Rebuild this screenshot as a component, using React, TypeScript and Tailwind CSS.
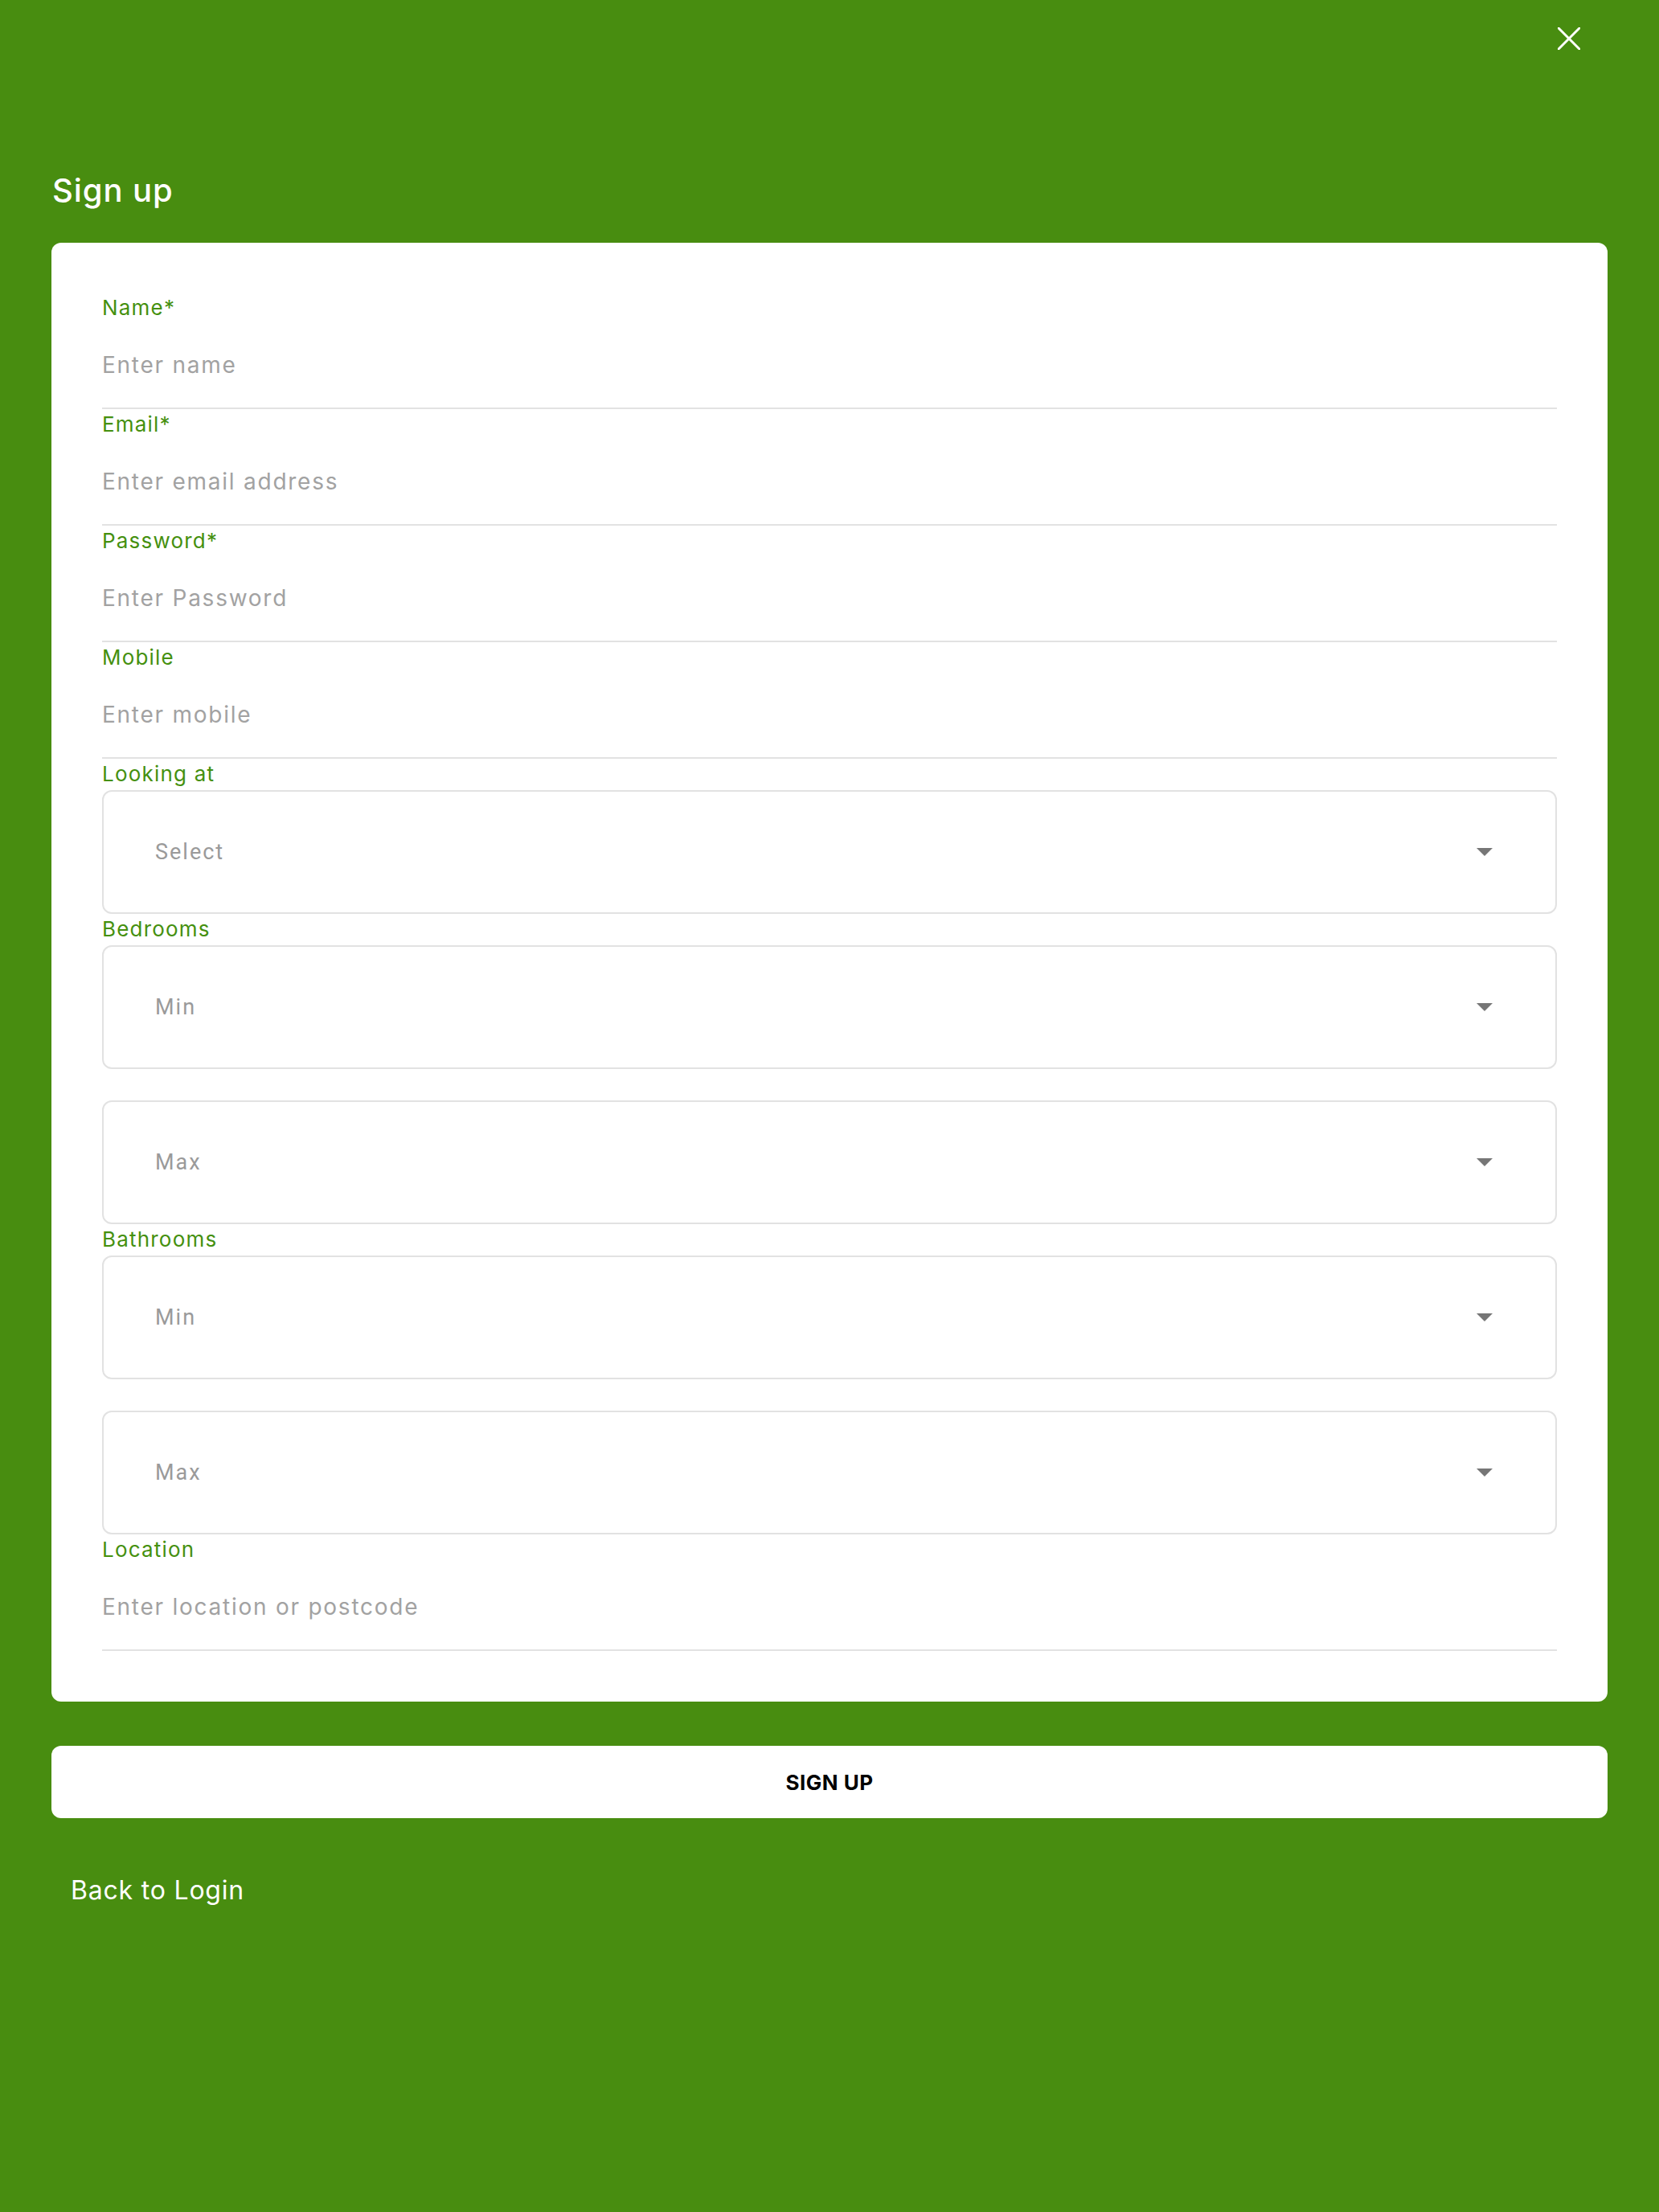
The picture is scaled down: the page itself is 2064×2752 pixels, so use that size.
type TextFieldProps = {
  label: string;
  placeholder: string;
  type?: string;
};

// Underlined text input with a small green label above it
function TextField({ label, placeholder, type = 'text' }: TextFieldProps) {
  return (
    <div className="flex flex-col">
      <label className="h-[34px] pt-[2px] text-[26px] leading-[34px] text-[#45900f] tracking-[1.2px]">
        {label}
      </label>
      <div className="flex h-[111px] items-center border-b-2 border-[#e2e2e2] pt-[3px]">
        <input
          type={type}
          placeholder={placeholder}
          className="w-full bg-transparent text-[28px] tracking-[1.75px] text-[#333] outline-none placeholder:text-[#a2a2a2]"
        />
      </div>
    </div>
  );
}

// Outlined dropdown with a solid caret on the right
function SelectBox({ value }: { value: string }) {
  return (
    <button
      type="button"
      className="flex h-[154px] w-full items-center justify-between rounded-[12px] border-2 border-[#e2e2e2] bg-white pl-[64px] pr-[78px] text-left"
    >
      <span className="text-[27px] tracking-[2px] text-[#9a9a9a] font-['Roboto',sans-serif]">{value}</span>
      <svg width="20" height="10" viewBox="0 0 20 10" aria-hidden="true">
        <path d="M0 0h20L10 10z" fill="#767676" />
      </svg>
    </button>
  );
}

function SelectField({ label, value }: { label?: string; value: string }) {
  return (
    <div className="flex flex-col">
      {label ? (
        <label className="mb-[5px] h-[34px] pt-[2px] text-[26px] leading-[34px] text-[#45900f] tracking-[1.2px]">
          {label}
        </label>
      ) : (
        <div className="h-[39px]" />
      )}
      <SelectBox value={value} />
    </div>
  );
}

export default function App() {
  return (
    <div className="min-h-[2752px] bg-[#488d10] font-['Inter',sans-serif]">
      {/* top bar with close button */}
      <header className="flex h-[95px] items-center justify-end pr-[98px]">
        <button type="button" aria-label="Close" className="text-white">
          <svg width="28" height="28" viewBox="0 0 28 28" aria-hidden="true">
            <path d="M1 1L27 27M27 1L1 27" stroke="currentColor" strokeWidth="3" strokeLinecap="round" />
          </svg>
        </button>
      </header>

      <h1 className="mt-[112px] px-[65px] text-[40px] font-medium leading-[60px] tracking-[0.9px] text-white">
        Sign up
      </h1>

      <main className="mx-[64px] mt-[35px]">
        <form className="flex flex-col rounded-[12px] bg-white px-[63px] pt-[62px] pb-[63px]">
          <TextField label="Name*" placeholder="Enter name" />
          <TextField label="Email*" placeholder="Enter email address" type="email" />
          <TextField label="Password*" placeholder="Enter Password" type="password" />
          <TextField label="Mobile" placeholder="Enter mobile" type="tel" />
          <SelectField label="Looking at" value="Select" />
          <SelectField label="Bedrooms" value="Min" />
          <SelectField value="Max" />
          <SelectField label="Bathrooms" value="Min" />
          <SelectField value="Max" />
          <TextField label="Location" placeholder="Enter location or postcode" />
        </form>

        <button
          type="button"
          className="mt-[55px] flex h-[90px] w-full items-center justify-center rounded-[12px] bg-white text-[26px] font-bold tracking-[0.5px] text-black"
        >
          SIGN UP
        </button>

        <a href="#" className="ml-[24px] mt-[66px] block text-[32px] leading-[48px] tracking-[0.8px] text-white">
          Back to Login
        </a>
      </main>
    </div>
  );
}
